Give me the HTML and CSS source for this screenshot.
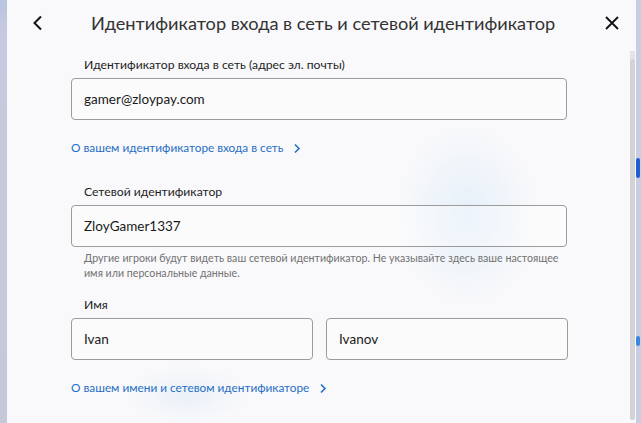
FILE: index.html
```html
<!DOCTYPE html>
<html lang="ru">
<head>
<meta charset="utf-8">
<link rel="stylesheet" href="styles.css">
</head>
<body>
<div class="screen">
  <div class="edge-left"></div>
  <div class="dialog">
    <header class="header">
      <button class="icon-btn back" aria-label="Назад">
        <svg width="14" height="16" viewBox="0 0 14 16"><path d="M10 1.5 L3.5 8 L10 14.5" fill="none" stroke="#111" stroke-width="2"/></svg>
      </button>
      <h1 class="title">Идентификатор входа в сеть и сетевой идентификатор</h1>
      <button class="icon-btn close" aria-label="Закрыть">
        <svg width="14" height="14" viewBox="0 0 14 14"><path d="M1 1 L13 13 M13 1 L1 13" fill="none" stroke="#111" stroke-width="1.8"/></svg>
      </button>
    </header>
    <div class="content">
      <div class="form">
        <section class="field">
          <div class="label">Идентификатор входа в сеть (адрес эл. почты)</div>
          <div class="input">gamer@zloypay.com</div>
        </section>
        <a class="link link-1">О вашем идентификаторе входа в сеть
          <svg width="8" height="11" viewBox="0 0 8 11"><path d="M2 1.5 L6 5.5 L2 9.5" fill="none" stroke="#1f6fc5" stroke-width="1.6"/></svg>
        </a>
        <section class="field field-2">
          <div class="label">Сетевой идентификатор</div>
          <div class="input">ZloyGamer1337</div>
          <p class="help">Другие игроки будут видеть ваш сетевой идентификатор. Не указывайте здесь ваше настоящее имя или персональные данные.</p>
        </section>
        <section class="field field-3">
          <div class="label">Имя</div>
          <div class="row">
            <div class="input">Ivan</div>
            <div class="input">Ivanov</div>
          </div>
        </section>
        <a class="link link-2">О вашем имени и сетевом идентификаторе
          <svg width="8" height="11" viewBox="0 0 8 11"><path d="M2 1.5 L6 5.5 L2 9.5" fill="none" stroke="#1f6fc5" stroke-width="1.6"/></svg>
        </a>
      </div>
      <div class="scrollbar"><div class="arrow"></div><div class="thumb"></div></div>
    </div>
  </div>
  <div class="edge-right"><span class="blip b1"></span><span class="blip b2"></span></div>
</div>
</body>
</html>
```
FILE: styles.css
```css
* { box-sizing: border-box; }
html, body { margin: 0; padding: 0; }
body {
  width: 641px;
  height: 423px;
  overflow: hidden;
  font-family: Lato, "Noto Sans", sans-serif;
  background: #f8f9fb;
}
.screen {
  display: flex;
  width: 641px;
  height: 423px;
}
.edge-left {
  width: 7px;
  flex: none;
  background: linear-gradient(180deg, #b9c4e0 0, #c6cae0 30px, #c5c8d9 100%);
}
.edge-right {
  width: 5px;
  flex: none;
  position: relative;
  background: #c9cde3;
}
.blip {
  position: absolute;
  left: 0;
  width: 4px;
  border-radius: 2px;
  background: #1f5fd1;
}
.b1 { top: 158px; height: 20px; }
.b2 { top: 336px; height: 10px; background: #3a86e0; }
.dialog {
  flex: 1;
  min-width: 0;
  overflow: hidden;
  display: flex;
  flex-direction: column;
  background:
    radial-gradient(ellipse 70px 90px at 460px 215px, rgba(205, 228, 246, 0.45), rgba(205, 228, 246, 0) 100%),
    radial-gradient(ellipse 60px 30px at 180px 395px, rgba(212, 228, 242, 0.4), rgba(212, 228, 242, 0) 100%),
    #f9f9fb;
}
.header {
  height: 46px;
  display: flex;
  align-items: center;
  padding: 0 0 0 24px;
}
.icon-btn {
  border: 0;
  background: none;
  padding: 0;
  display: flex;
  align-items: center;
  justify-content: center;
  flex: none;
}
.back { width: 14px; height: 16px; }
.title {
  margin: 0 0 0 46px;
  font-size: 18.2px;
  font-weight: 400;
  color: #333;
  white-space: nowrap;
  flex: 1;
  min-width: 0;
}
.close { width: 14px; height: 14px; margin-right: 17px; }
.content {
  flex: 1;
  min-height: 0;
  display: flex;
}
.form {
  flex: 1;
  min-width: 0;
  padding: 10px 0 0 64px;
  display: flex;
  flex-direction: column;
}
.label {
  font-size: 12.2px;
  color: #1e1e1e;
  padding-left: 13px;
  line-height: 18px;
  margin-bottom: 4px;
}
.input {
  width: 496px;
  height: 42px;
  border: 1px solid #9c9c9c;
  border-radius: 4px;
  display: flex;
  align-items: center;
  padding-left: 12px;
  font-size: 13.5px;
  color: #1a1a1a;
  background: rgba(255, 255, 255, 0.3);
}
.row {
  display: flex;
  gap: 13px;
}
.row .input { width: 242px; }
.link {
  display: flex;
  align-items: center;
  gap: 10px;
  font-size: 11.8px;
  color: #1f6fc5;
  line-height: 18px;
}
.link-1 { margin-top: 19px; }
.field-2 { margin-top: 26px; }
.help {
  margin: 3px 0 0 13px;
  width: 475px;
  font-size: 10.65px;
  line-height: 15px;
  color: #727272;
}
.field-3 { margin-top: 16px; }
.link-2 { margin-top: 19px; }
.scrollbar {
  width: 5px;
  flex: none;
  margin: 5px 1px 3px 0;
  display: flex;
  flex-direction: column;
  background: #ededee;
}
.arrow { height: 8px; background: #e4e4e6; }
.thumb { flex: 1; background: #d3d3d5; border-radius: 2px; }
```
